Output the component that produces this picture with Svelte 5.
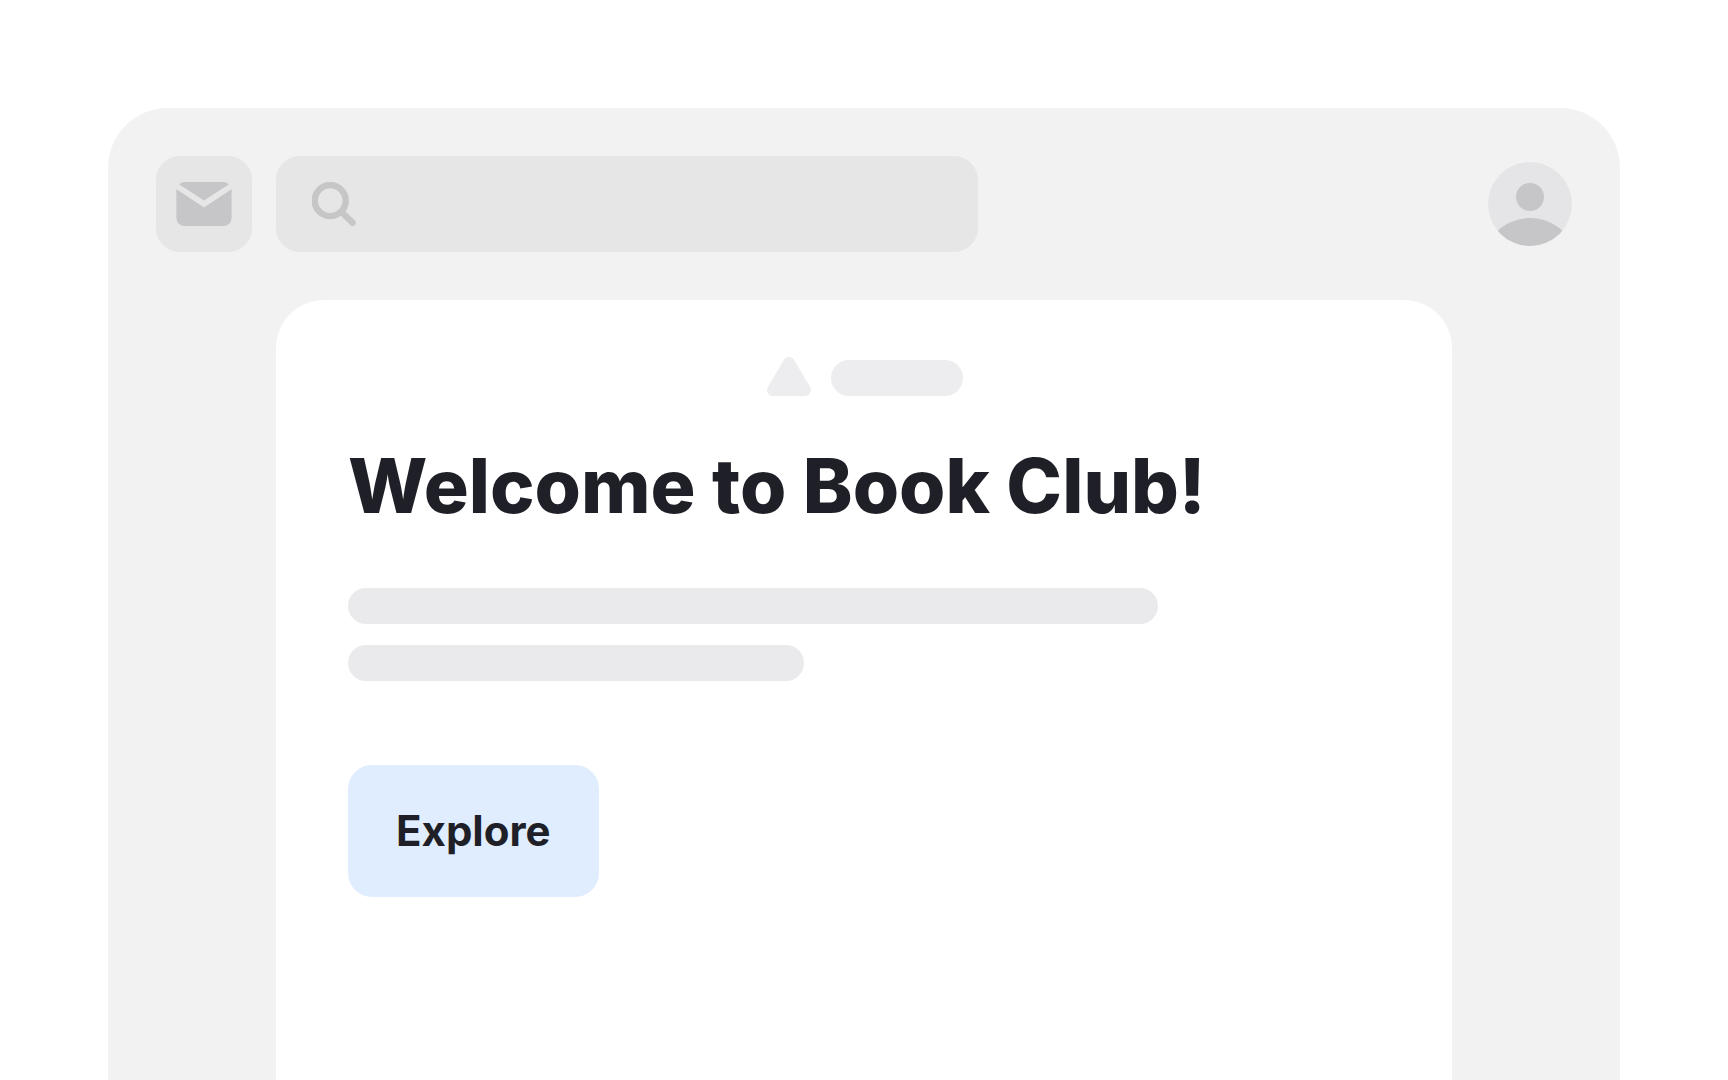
<script>
  const lines = [810, 456];
  let query = $state('');
</script>

<svelte:head>
  <title>Book Club</title>
</svelte:head>

<div class="page">
  <div class="window">
    <header class="toolbar">
      <button class="mail" type="button" aria-label="Mail">
        <svg width="56" height="44" viewBox="0 0 56 44" aria-hidden="true">
          <path d="M3.3 2.5C4.7 .8 6.5 0 9 0H47C49.5 0 51.3 .8 52.7 2.5L28 18.4Z" />
          <path d="M.4 7.2L27 24.8Q28 25.4 29 24.8L55.6 7.2V36A8 8 0 0 1 47.6 44H8.4A8 8 0 0 1 .4 36Z" />
        </svg>
      </button>

      <label class="search">
        <svg width="45" height="44" viewBox="0 0 45 44" aria-hidden="true">
          <circle cx="18.2" cy="18.6" r="15.5" />
          <path d="M29.8 30.2L40.6 40.8" />
        </svg>
        <input type="search" aria-label="Search" bind:value={query} />
      </label>

      <button class="avatar" type="button" aria-label="Profile">
        <svg width="84" height="84" viewBox="0 0 84 84" aria-hidden="true">
          <circle cx="42" cy="35" r="14" />
          <circle cx="42" cy="104" r="48" />
        </svg>
      </button>
    </header>

    <main class="card">
      <div class="brand" aria-hidden="true">
        <svg width="46" height="39" viewBox="-2 0 46 39">
          <path d="M22 6L6 33H38Z" />
        </svg>
        <span class="pill"></span>
      </div>

      <h1>Welcome to Book Club!</h1>

      <div class="lines" aria-hidden="true">
        {#each lines as width}
          <span class="line" style:width="{width}px"></span>
        {/each}
      </div>

      <button class="explore" type="button">Explore</button>
    </main>
  </div>
</div>

<style>
  :global(body) {
    margin: 0;
    background: #ffffff;
  }

  .page {
    box-sizing: border-box;
    display: flex;
    min-height: 100vh;
    padding: 108px 108px 0;
    color: #1f1f28;
    font-family: Inter, 'Liberation Sans', sans-serif;
  }

  .window {
    flex: 1;
    min-width: 0;
    display: flex;
    flex-direction: column;
    gap: 48px;
    padding: 48px 48px 0;
    border-radius: 60px 60px 0 0;
    background: #f2f2f2;
  }

  .toolbar {
    display: flex;
    align-items: center;
    gap: 24px;
  }

  button {
    padding: 0;
    border: 0;
    color: inherit;
    font: inherit;
    cursor: pointer;
  }

  .mail {
    flex: none;
    display: flex;
    align-items: center;
    justify-content: center;
    width: 96px;
    height: 96px;
    border-radius: 24px;
    background: #e6e6e6;
  }

  .mail svg,
  .avatar svg {
    fill: #c6c6c8;
  }

  .search {
    box-sizing: border-box;
    flex: 0 1 702px;
    min-width: 0;
    display: flex;
    align-items: center;
    gap: 24px;
    height: 96px;
    padding: 0 36px;
    border-radius: 24px;
    background: #e6e6e6;
  }

  .search svg {
    flex: none;
    fill: none;
    stroke: #c6c6c6;
    stroke-width: 6.4;
    stroke-linecap: round;
  }

  .search input {
    flex: 1;
    min-width: 0;
    padding: 0;
    border: 0;
    outline: 0;
    background: transparent;
    color: inherit;
    font: inherit;
    font-size: 36px;
    appearance: none;
  }

  .avatar {
    flex: none;
    width: 84px;
    height: 84px;
    margin-left: auto;
    border-radius: 50%;
    overflow: hidden;
    background: #e5e5e7;
  }

  .avatar svg {
    display: block;
  }

  .card {
    flex: 1;
    display: flex;
    flex-direction: column;
    align-items: flex-start;
    margin: 0 120px;
    padding: 57px 72px 72px;
    border-radius: 48px 48px 0 0;
    background: #ffffff;
  }

  .brand {
    display: flex;
    align-items: flex-end;
    align-self: center;
    gap: 20px;
  }

  .brand svg {
    fill: #ededef;
    stroke: #ededef;
    stroke-width: 12;
    stroke-linejoin: round;
  }

  .pill {
    width: 132px;
    height: 36px;
    border-radius: 18px;
    background: #ededef;
  }

  h1 {
    margin: 48px 0 60px;
    font-size: 75px;
    font-weight: 800;
    line-height: 84px;
  }

  .lines {
    align-self: stretch;
    display: flex;
    flex-direction: column;
    gap: 21px;
  }

  .line {
    max-width: 100%;
    height: 36px;
    border-radius: 18px;
    background: #eaeaec;
  }

  .explore {
    margin-top: 84px;
    padding: 36px 48px;
    border-radius: 24px;
    background: #e0edff;
    font-size: 42px;
    font-weight: 700;
    line-height: 60px;
  }
</style>
